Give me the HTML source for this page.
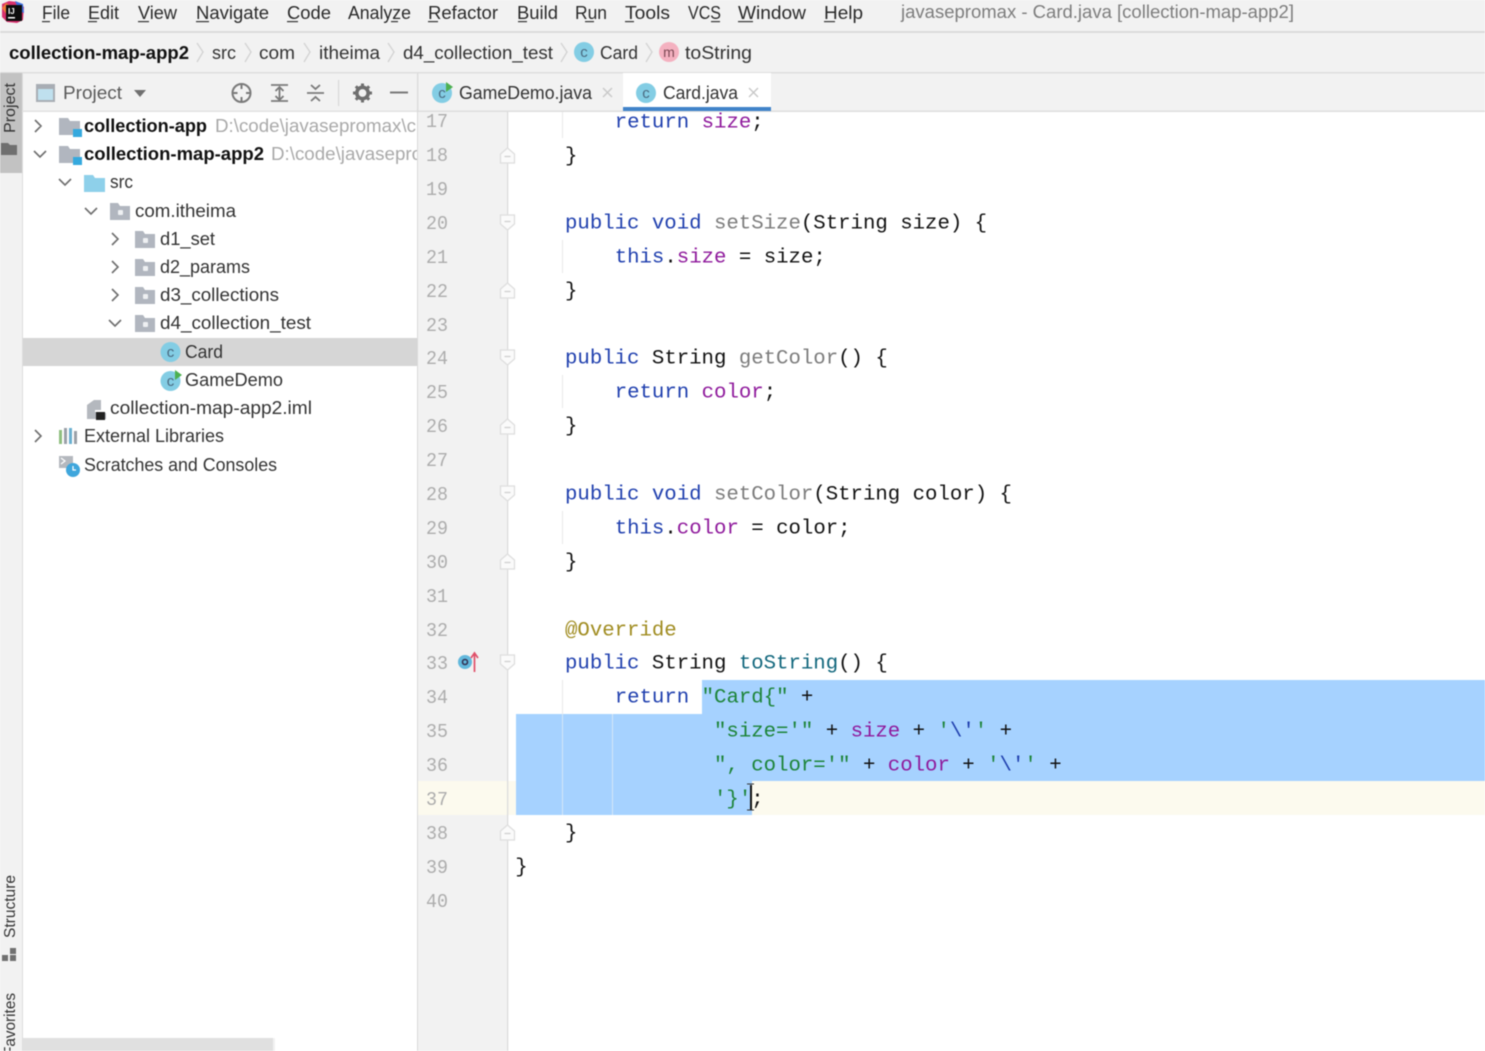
<!DOCTYPE html>
<html lang="en"><head><meta charset="utf-8"><title>javasepromax - Card.java</title>
<style>
html,body{margin:0;padding:0;background:#fff;width:1485px;height:1051px;overflow:hidden}
svg{display:block;position:absolute;left:0;top:0}
text{font-family:"Liberation Sans",sans-serif;white-space:pre}
.m{font-size:18.5px;fill:#2a2a2a}
.t{font-size:18.5px;fill:#333}
.b{font-size:18.5px;font-weight:bold;fill:#111}
.p{font-size:18px;fill:#a9a9a9}
.n text{font-family:"Liberation Mono",monospace;font-size:19px;fill:#adadad}
.c{font-family:"Liberation Mono",monospace;font-size:20.7px;fill:#111}
.k{fill:#1f3fae}.f{fill:#8f1a9c}.s{fill:#1c8438}.g{fill:#7c7c7c}.v{fill:#12677d}.a{fill:#a08c20}
.ic{font-size:15px;fill:#4a6a80;text-anchor:middle}
.ch{fill:none;stroke:#6e6e6e;stroke-width:1.6}
.bc{fill:none;stroke:#d2d2d2;stroke-width:1.3}
.tool{fill:none;stroke:#7a7a7a;stroke-width:2}
</style></head><body>
<svg width="1485" height="1051" viewBox="0 0 1485 1051" xmlns="http://www.w3.org/2000/svg">
<defs>
<clipPath id="tc"><rect x="22" y="112" width="395" height="939"/></clipPath>
<clipPath id="bc"><rect x="0" y="860" width="22" height="191"/></clipPath>
<symbol id="pkg" overflow="visible"><path d="M0 0h8l2 3h10v14H0z" fill="#b1b6bf"/><rect x="8" y="7" width="5" height="5" rx="1" fill="#eef0f2"/></symbol>
<symbol id="mod" overflow="visible"><path d="M0 0h9l2 3h10v14H0z" fill="#b1b6bf"/><rect x="14" y="11" width="9" height="8" fill="#35a9de"/></symbol>
<symbol id="up" overflow="visible"><path d="M-7 8V-1L0-7 7-1V8z" fill="#fafafa" stroke="#dedede" stroke-width="1.3"/><path d="M-3 1.500H3" stroke="#cfcfcf" stroke-width="1.300"/></symbol>
<symbol id="dn" overflow="visible"><path d="M-7-8V1L0 7 7 1V-8z" fill="#fafafa" stroke="#dedede" stroke-width="1.3"/><path d="M-3-1.500H3" stroke="#cfcfcf" stroke-width="1.300"/></symbol>
</defs>
<g style="filter:blur(.45px)">
<!-- chrome -->
<rect width="1485" height="1051" fill="#fff"/>
<rect width="1485" height="112" fill="#f2f2f2"/>
<rect y="31" width="1485" height="2" fill="#dcdcdc"/>
<rect y="72" width="1485" height="1.500" fill="#dedede"/>
<rect x="0" y="73" width="22" height="978" fill="#f2f2f2"/>
<rect x="22" y="73" width="1" height="978" fill="#dcdcdc"/>
<rect x="0" y="73" width="22" height="100" fill="#c2c2c2"/>
<rect x="22" y="110.500" width="396" height="1.500" fill="#e2e2e2"/>
<rect x="418" y="110.500" width="1067" height="1.500" fill="#dedede"/>
<rect x="417" y="73" width="1.300" height="978" fill="#dadada"/>
<!-- gutter -->
<rect x="418" y="112" width="89" height="939" fill="#f2f2f2"/>
<rect x="418" y="781" width="1067" height="34" fill="#fcfaee"/>
<rect x="507" y="112" width="1.300" height="939" fill="#dcdcdc"/>

<!-- logo -->
<path d="M2 4 9 1l8 1 7 5-1 13-6 3-10-1-5-5z" fill="#d9306e"/><path d="M2 8 6 3l5 3-4 9z" fill="#ef7a3a"/>
<path d="M15 1l8 3 1 9-5-2z" fill="#3f6fe0"/>
<rect x="6" y="5" width="16" height="16" fill="#0d0d0d"/>
<text x="8" y="14" style="font-size:8px;font-weight:bold;fill:#fff">IJ</text><rect x="8" y="17" width="7" height="1.500" fill="#fff"/>
<!-- menu -->
<text class="m" x="42" y="19" textLength="28" lengthAdjust="spacingAndGlyphs">File</text>
<text class="m" x="88" y="19" textLength="31" lengthAdjust="spacingAndGlyphs">Edit</text>
<text class="m" x="138" y="19" textLength="39" lengthAdjust="spacingAndGlyphs">View</text>
<text class="m" x="196" y="19" textLength="73" lengthAdjust="spacingAndGlyphs">Navigate</text>
<text class="m" x="287" y="19" textLength="44" lengthAdjust="spacingAndGlyphs">Code</text>
<text class="m" x="348" y="19" textLength="63" lengthAdjust="spacingAndGlyphs">Analyze</text>
<text class="m" x="428" y="19" textLength="70" lengthAdjust="spacingAndGlyphs">Refactor</text>
<text class="m" x="517" y="19" textLength="41" lengthAdjust="spacingAndGlyphs">Build</text>
<text class="m" x="575" y="19" textLength="32" lengthAdjust="spacingAndGlyphs">Run</text>
<text class="m" x="625" y="19" textLength="45" lengthAdjust="spacingAndGlyphs">Tools</text>
<text class="m" x="688" y="19" textLength="33" lengthAdjust="spacingAndGlyphs">VCS</text>
<text class="m" x="738" y="19" textLength="68" lengthAdjust="spacingAndGlyphs">Window</text>
<text class="m" x="824" y="19" textLength="39" lengthAdjust="spacingAndGlyphs">Help</text>
<g fill="#333"><rect x="42" y="21" width="8" height="1.200"/><rect x="88" y="21" width="9" height="1.200"/><rect x="138" y="21" width="11" height="1.200"/><rect x="196" y="21" width="13" height="1.200"/><rect x="287" y="21" width="11" height="1.200"/><rect x="391" y="21" width="7" height="1.200"/><rect x="428" y="21" width="10" height="1.200"/><rect x="518" y="21" width="9" height="1.200"/><rect x="585" y="21" width="9" height="1.200"/><rect x="625" y="21" width="9" height="1.200"/><rect x="711" y="21" width="9" height="1.200"/><rect x="738" y="21" width="15" height="1.200"/><rect x="824" y="21" width="11" height="1.200"/></g>
<text x="901" y="18" textLength="393" lengthAdjust="spacingAndGlyphs" style="font-size:18px;fill:#7d7d7d">javasepromax - Card.java [collection-map-app2]</text>

<!-- breadcrumb -->
<text class="b" x="9" y="59" textLength="180" lengthAdjust="spacingAndGlyphs">collection-map-app2</text>
<text class="t" x="212" y="59" textLength="24" lengthAdjust="spacingAndGlyphs">src</text>
<text class="t" x="259" y="59" textLength="36" lengthAdjust="spacingAndGlyphs">com</text>
<text class="t" x="319" y="59" textLength="61" lengthAdjust="spacingAndGlyphs">itheima</text>
<text class="t" x="403" y="59" textLength="150" lengthAdjust="spacingAndGlyphs">d4_collection_test</text>
<text class="t" x="600" y="59" textLength="38" lengthAdjust="spacingAndGlyphs">Card</text>
<text class="t" x="685" y="59" textLength="67" lengthAdjust="spacingAndGlyphs">toString</text>
<g class="bc"><path d="M197 43l6 9-6 10"/><path d="M245 43l6 9-6 10"/><path d="M304 43l6 9-6 10"/><path d="M388 43l6 9-6 10"/><path d="M561 43l6 9-6 10"/><path d="M646 43l6 9-6 10"/></g>
<circle cx="584" cy="52" r="10" fill="#83cde4"/><text class="ic" x="584" y="57">c</text>
<circle cx="669" cy="52" r="10" fill="#f4b1c0"/><text class="ic" x="669" y="57" style="fill:#7d4a55;font-size:14px">m</text>

<!-- left strip -->
<text transform="translate(15 133) rotate(-90)" textLength="50" lengthAdjust="spacingAndGlyphs" style="font-size:15.500px;fill:#333">Project</text>
<path d="M1 143h7l2 2h7v10H1z" fill="#6f6f6f"/>
<text transform="translate(15 938) rotate(-90)" textLength="63" lengthAdjust="spacingAndGlyphs" style="font-size:15.500px;fill:#333">Structure</text>
<g fill="#707070"><rect x="2" y="955" width="6" height="6"/><rect x="10" y="955" width="6" height="6"/><rect x="10" y="948" width="6" height="6"/></g>
<g clip-path="url(#bc)"><text transform="translate(15 1056) rotate(-90)" textLength="63" lengthAdjust="spacingAndGlyphs" style="font-size:15.500px;fill:#333">Favorites</text></g>

<!-- project header -->
<rect x="36" y="84" width="19" height="18" fill="#a8adb4"/><rect x="38" y="89" width="15" height="11" fill="#bfe0ee"/>
<text x="63" y="99" textLength="59" lengthAdjust="spacingAndGlyphs" style="font-size:18.500px;fill:#5a5a5a">Project</text>
<path d="M134 90h12l-6 7z" fill="#707070"/>
<g class="tool">
<circle cx="241.500" cy="93" r="9"/><path d="M241.500 84v5M241.500 97v5M232.500 93h5M246 93h5"/>
<path d="M271 85h17M271 101h17M279.500 88v11M275.500 91l4-4 4 4M275.500 96l4 4 4-4" stroke-width="1.800"/>
<path d="M307 93h17M315.500 84v0M311 85l4.500 4 4.500-4M311 101l4.500-4 4.500 4" stroke-width="1.800"/>
</g>
<rect x="338" y="80" width="1.200" height="26" fill="#d8d8d8"/>
<circle cx="362.500" cy="93" r="5.700" fill="none" stroke="#6f6f6f" stroke-width="3.600"/>
<path d="M362.500 83.500v3M362.500 99.500v3M353 93h3M369 93h3M355.800 86.300l2.200 2.200M367 97.500l2.200 2.200M355.800 99.700l2.200-2.200M367 88.500l2.200-2.200" stroke="#6f6f6f" stroke-width="3"/>
<rect x="390" y="91.500" width="18" height="2" fill="#7a7a7a"/>

<!-- tree -->
<rect x="23" y="338" width="394" height="28" fill="#d6d6d6"/>
<g clip-path="url(#tc)">
<path class="ch" d="M35 120l6 6-6 6M34 151l6 6 6-6M59 179l6 6 6-6M85 208l6 6 6-6M112 233l6 6-6 6M112 261l6 6-6 6M112 289l6 6-6 6M109 320l6 6 6-6M35 430l6 6-6 6"/>
<use href="#mod" x="59" y="118"/><use href="#mod" x="59" y="146"/>
<path d="M84 175h9l2 3h10v14H84z" fill="#8ed0ea"/>
<use href="#pkg" x="110" y="203"/><use href="#pkg" x="135" y="231"/><use href="#pkg" x="135" y="259"/><use href="#pkg" x="135" y="287"/><use href="#pkg" x="135" y="315"/>
<text class="b" x="84" y="132" textLength="123" lengthAdjust="spacingAndGlyphs">collection-app</text>
<text class="p" x="215" y="132" textLength="201" lengthAdjust="spacingAndGlyphs">D:\code\javasepromax\c</text>
<text class="b" x="84" y="160" textLength="180" lengthAdjust="spacingAndGlyphs">collection-map-app2</text>
<text class="p" x="271" y="160" textLength="201" lengthAdjust="spacingAndGlyphs">D:\code\javasepromax\c</text>
<text class="t" x="110" y="188" textLength="23" lengthAdjust="spacingAndGlyphs">src</text>
<text class="t" x="135" y="217" textLength="101" lengthAdjust="spacingAndGlyphs">com.itheima</text>
<text class="t" x="160" y="245" textLength="55" lengthAdjust="spacingAndGlyphs">d1_set</text>
<text class="t" x="160" y="273" textLength="90" lengthAdjust="spacingAndGlyphs">d2_params</text>
<text class="t" x="160" y="301" textLength="119" lengthAdjust="spacingAndGlyphs">d3_collections</text>
<text class="t" x="160" y="329" textLength="151" lengthAdjust="spacingAndGlyphs">d4_collection_test</text>
<circle cx="170.500" cy="352" r="10" fill="#83cde4"/><text class="ic" x="170.500" y="357">c</text>
<text class="t" x="185" y="358" textLength="38" lengthAdjust="spacingAndGlyphs">Card</text>
<circle cx="170.500" cy="381" r="10" fill="#83cde4"/><text class="ic" x="170.500" y="386">c</text><path d="M175 370l7 5-7 5z" fill="#4cb050"/>
<text class="t" x="185" y="386" textLength="98" lengthAdjust="spacingAndGlyphs">GameDemo</text>
<path d="M87 405l7-5h7v13h5v6H87z" fill="#b4b8be"/><rect x="96" y="412" width="9" height="8" fill="#222"/><rect x="95" y="410" width="10" height="2" fill="#fff"/>
<text class="t" x="110" y="414" textLength="202" lengthAdjust="spacingAndGlyphs">collection-map-app2.iml</text>
<g><rect x="59" y="430" width="3" height="14" fill="#8fbf7f"/><rect x="64" y="428" width="3" height="16" fill="#9aa0a8"/><rect x="69" y="428" width="3" height="16" fill="#6ab0d0"/><rect x="74" y="431" width="3" height="13" fill="#9aa0a8"/></g>
<text class="t" x="84" y="442" textLength="140" lengthAdjust="spacingAndGlyphs">External Libraries</text>
<rect x="59" y="456" width="14" height="12" fill="#b4b8be"/><path d="M61 458l4 3-4 3" fill="none" stroke="#fff" stroke-width="1.200"/>
<circle cx="73" cy="470" r="7" fill="#3fa6dc"/><path d="M73 466v4h3" fill="none" stroke="#fff" stroke-width="1.200"/>
<text class="t" x="84" y="471" textLength="193" lengthAdjust="spacingAndGlyphs">Scratches and Consoles</text>
</g>
<rect x="23" y="1038" width="250" height="13" fill="#e0e0e0"/><rect x="273" y="1038" width="2" height="13" fill="#f2f2f2"/>

<!-- tabs -->
<circle cx="442" cy="93" r="10" fill="#83cde4"/><text class="ic" x="442" y="98">c</text><path d="M446 82l7 5-7 5z" fill="#4cb050"/>
<text class="t" x="459" y="99" textLength="133" lengthAdjust="spacingAndGlyphs">GameDemo.java</text>
<path d="M603 88l9 9M612 88l-9 9" stroke="#c8c8c8" stroke-width="1.400"/>
<rect x="623" y="73" width="148" height="35" fill="#fff"/><rect x="623" y="107" width="148" height="4" fill="#4083c9"/>
<circle cx="646" cy="93" r="10" fill="#83cde4"/><text class="ic" x="646" y="98">c</text>
<text class="t" x="663" y="99" textLength="75" lengthAdjust="spacingAndGlyphs">Card.java</text>
<path d="M749 88l9 9M758 88l-9 9" stroke="#c8c8c8" stroke-width="1.400"/>

<!-- selection -->
<path d="M702 680H1485V781H752V815H516V714H702z" fill="#a6d2ff"/>
<!-- guides -->
<g fill="#e8e8e8"><rect x="562" y="112" width="1" height="26"/><rect x="562" y="240" width="1" height="33"/><rect x="562" y="375" width="1" height="33"/><rect x="562" y="511" width="1" height="33"/><rect x="562" y="680" width="1" height="34"/></g>
<g fill="#d4e6f7"><rect x="562" y="714" width="1" height="101"/><rect x="612" y="714" width="1" height="101"/></g>

<!-- line numbers -->
<g class="n">
<text x="426" y="127" textLength="22" lengthAdjust="spacingAndGlyphs">17</text><text x="426" y="161" textLength="22" lengthAdjust="spacingAndGlyphs">18</text><text x="426" y="195" textLength="22" lengthAdjust="spacingAndGlyphs">19</text><text x="426" y="229" textLength="22" lengthAdjust="spacingAndGlyphs">20</text><text x="426" y="263" textLength="22" lengthAdjust="spacingAndGlyphs">21</text><text x="426" y="297" textLength="22" lengthAdjust="spacingAndGlyphs">22</text><text x="426" y="331" textLength="22" lengthAdjust="spacingAndGlyphs">23</text><text x="426" y="364" textLength="22" lengthAdjust="spacingAndGlyphs">24</text><text x="426" y="398" textLength="22" lengthAdjust="spacingAndGlyphs">25</text><text x="426" y="432" textLength="22" lengthAdjust="spacingAndGlyphs">26</text><text x="426" y="466" textLength="22" lengthAdjust="spacingAndGlyphs">27</text><text x="426" y="500" textLength="22" lengthAdjust="spacingAndGlyphs">28</text><text x="426" y="534" textLength="22" lengthAdjust="spacingAndGlyphs">29</text><text x="426" y="568" textLength="22" lengthAdjust="spacingAndGlyphs">30</text><text x="426" y="602" textLength="22" lengthAdjust="spacingAndGlyphs">31</text><text x="426" y="636" textLength="22" lengthAdjust="spacingAndGlyphs">32</text><text x="426" y="669" textLength="22" lengthAdjust="spacingAndGlyphs">33</text><text x="426" y="703" textLength="22" lengthAdjust="spacingAndGlyphs">34</text><text x="426" y="737" textLength="22" lengthAdjust="spacingAndGlyphs">35</text><text x="426" y="771" textLength="22" lengthAdjust="spacingAndGlyphs">36</text><text x="426" y="805" textLength="22" lengthAdjust="spacingAndGlyphs">37</text><text x="426" y="839" textLength="22" lengthAdjust="spacingAndGlyphs">38</text><text x="426" y="873" textLength="22" lengthAdjust="spacingAndGlyphs">39</text><text x="426" y="907" textLength="22" lengthAdjust="spacingAndGlyphs">40</text>
</g>
<!-- fold markers -->
<use href="#up" x="507.500" y="155"/><use href="#dn" x="507.500" y="223"/><use href="#up" x="507.500" y="290"/><use href="#dn" x="507.500" y="358"/><use href="#up" x="507.500" y="426"/><use href="#dn" x="507.500" y="494"/><use href="#up" x="507.500" y="561"/><use href="#dn" x="507.500" y="663"/><use href="#up" x="507.500" y="832"/>
<!-- override gutter icon -->
<circle cx="465" cy="662" r="7" fill="#62b8dc"/><circle cx="465" cy="662" r="2.500" fill="none" stroke="#335" stroke-width="1.600"/>
<path d="M474.500 672V654M471 658l3.500-5 3.500 5" fill="none" stroke="#e0506a" stroke-width="1.700"/>

<!-- code -->
<g transform="translate(-.7 -.6)">
<text class="c" x="615.400" y="128"><tspan class="k">return</tspan> <tspan class="f">size</tspan>;</text>
<text class="c" x="565.700" y="162">}</text>
<text class="c" x="565.700" y="229"><tspan class="k">public void</tspan> <tspan class="g">setSize</tspan>(String size) {</text>
<text class="c" x="615.400" y="263"><tspan class="k">this</tspan>.<tspan class="f">size</tspan> = size;</text>
<text class="c" x="565.700" y="297">}</text>
<text class="c" x="565.700" y="364"><tspan class="k">public</tspan> String <tspan class="g">getColor</tspan>() {</text>
<text class="c" x="615.400" y="398"><tspan class="k">return</tspan> <tspan class="f">color</tspan>;</text>
<text class="c" x="565.700" y="432">}</text>
<text class="c" x="565.700" y="500"><tspan class="k">public void</tspan> <tspan class="g">setColor</tspan>(String color) {</text>
<text class="c" x="615.400" y="534"><tspan class="k">this</tspan>.<tspan class="f">color</tspan> = color;</text>
<text class="c" x="565.700" y="568">}</text>
<text class="c a" x="565.700" y="636">@Override</text>
<text class="c" x="565.700" y="669"><tspan class="k">public</tspan> String <tspan class="v">toString</tspan>() {</text>
<text class="c" x="615.400" y="703"><tspan class="k">return</tspan> <tspan class="s">"Card{"</tspan> +</text>
<text class="c" x="714.700" y="737"><tspan class="s">"size='"</tspan> + <tspan class="f">size</tspan> + <tspan class="s">'</tspan><tspan class="k">\'</tspan><tspan class="s">'</tspan> +</text>
<text class="c" x="714.700" y="771"><tspan class="s">", color='"</tspan> + <tspan class="f">color</tspan> + <tspan class="s">'</tspan><tspan class="k">\'</tspan><tspan class="s">'</tspan> +</text>
<text class="c" x="714.700" y="805"><tspan class="s">'}'</tspan>;</text>
<text class="c" x="565.700" y="839">}</text>
<text class="c" x="516" y="873">}</text>
</g>
<!-- caret / I-beam -->
<path d="M751 785v25" stroke="#111" stroke-width="2"/><path d="M747 784h7M747 810h7" stroke="#333" stroke-width="1"/>
</g>
</svg>
</body></html>
